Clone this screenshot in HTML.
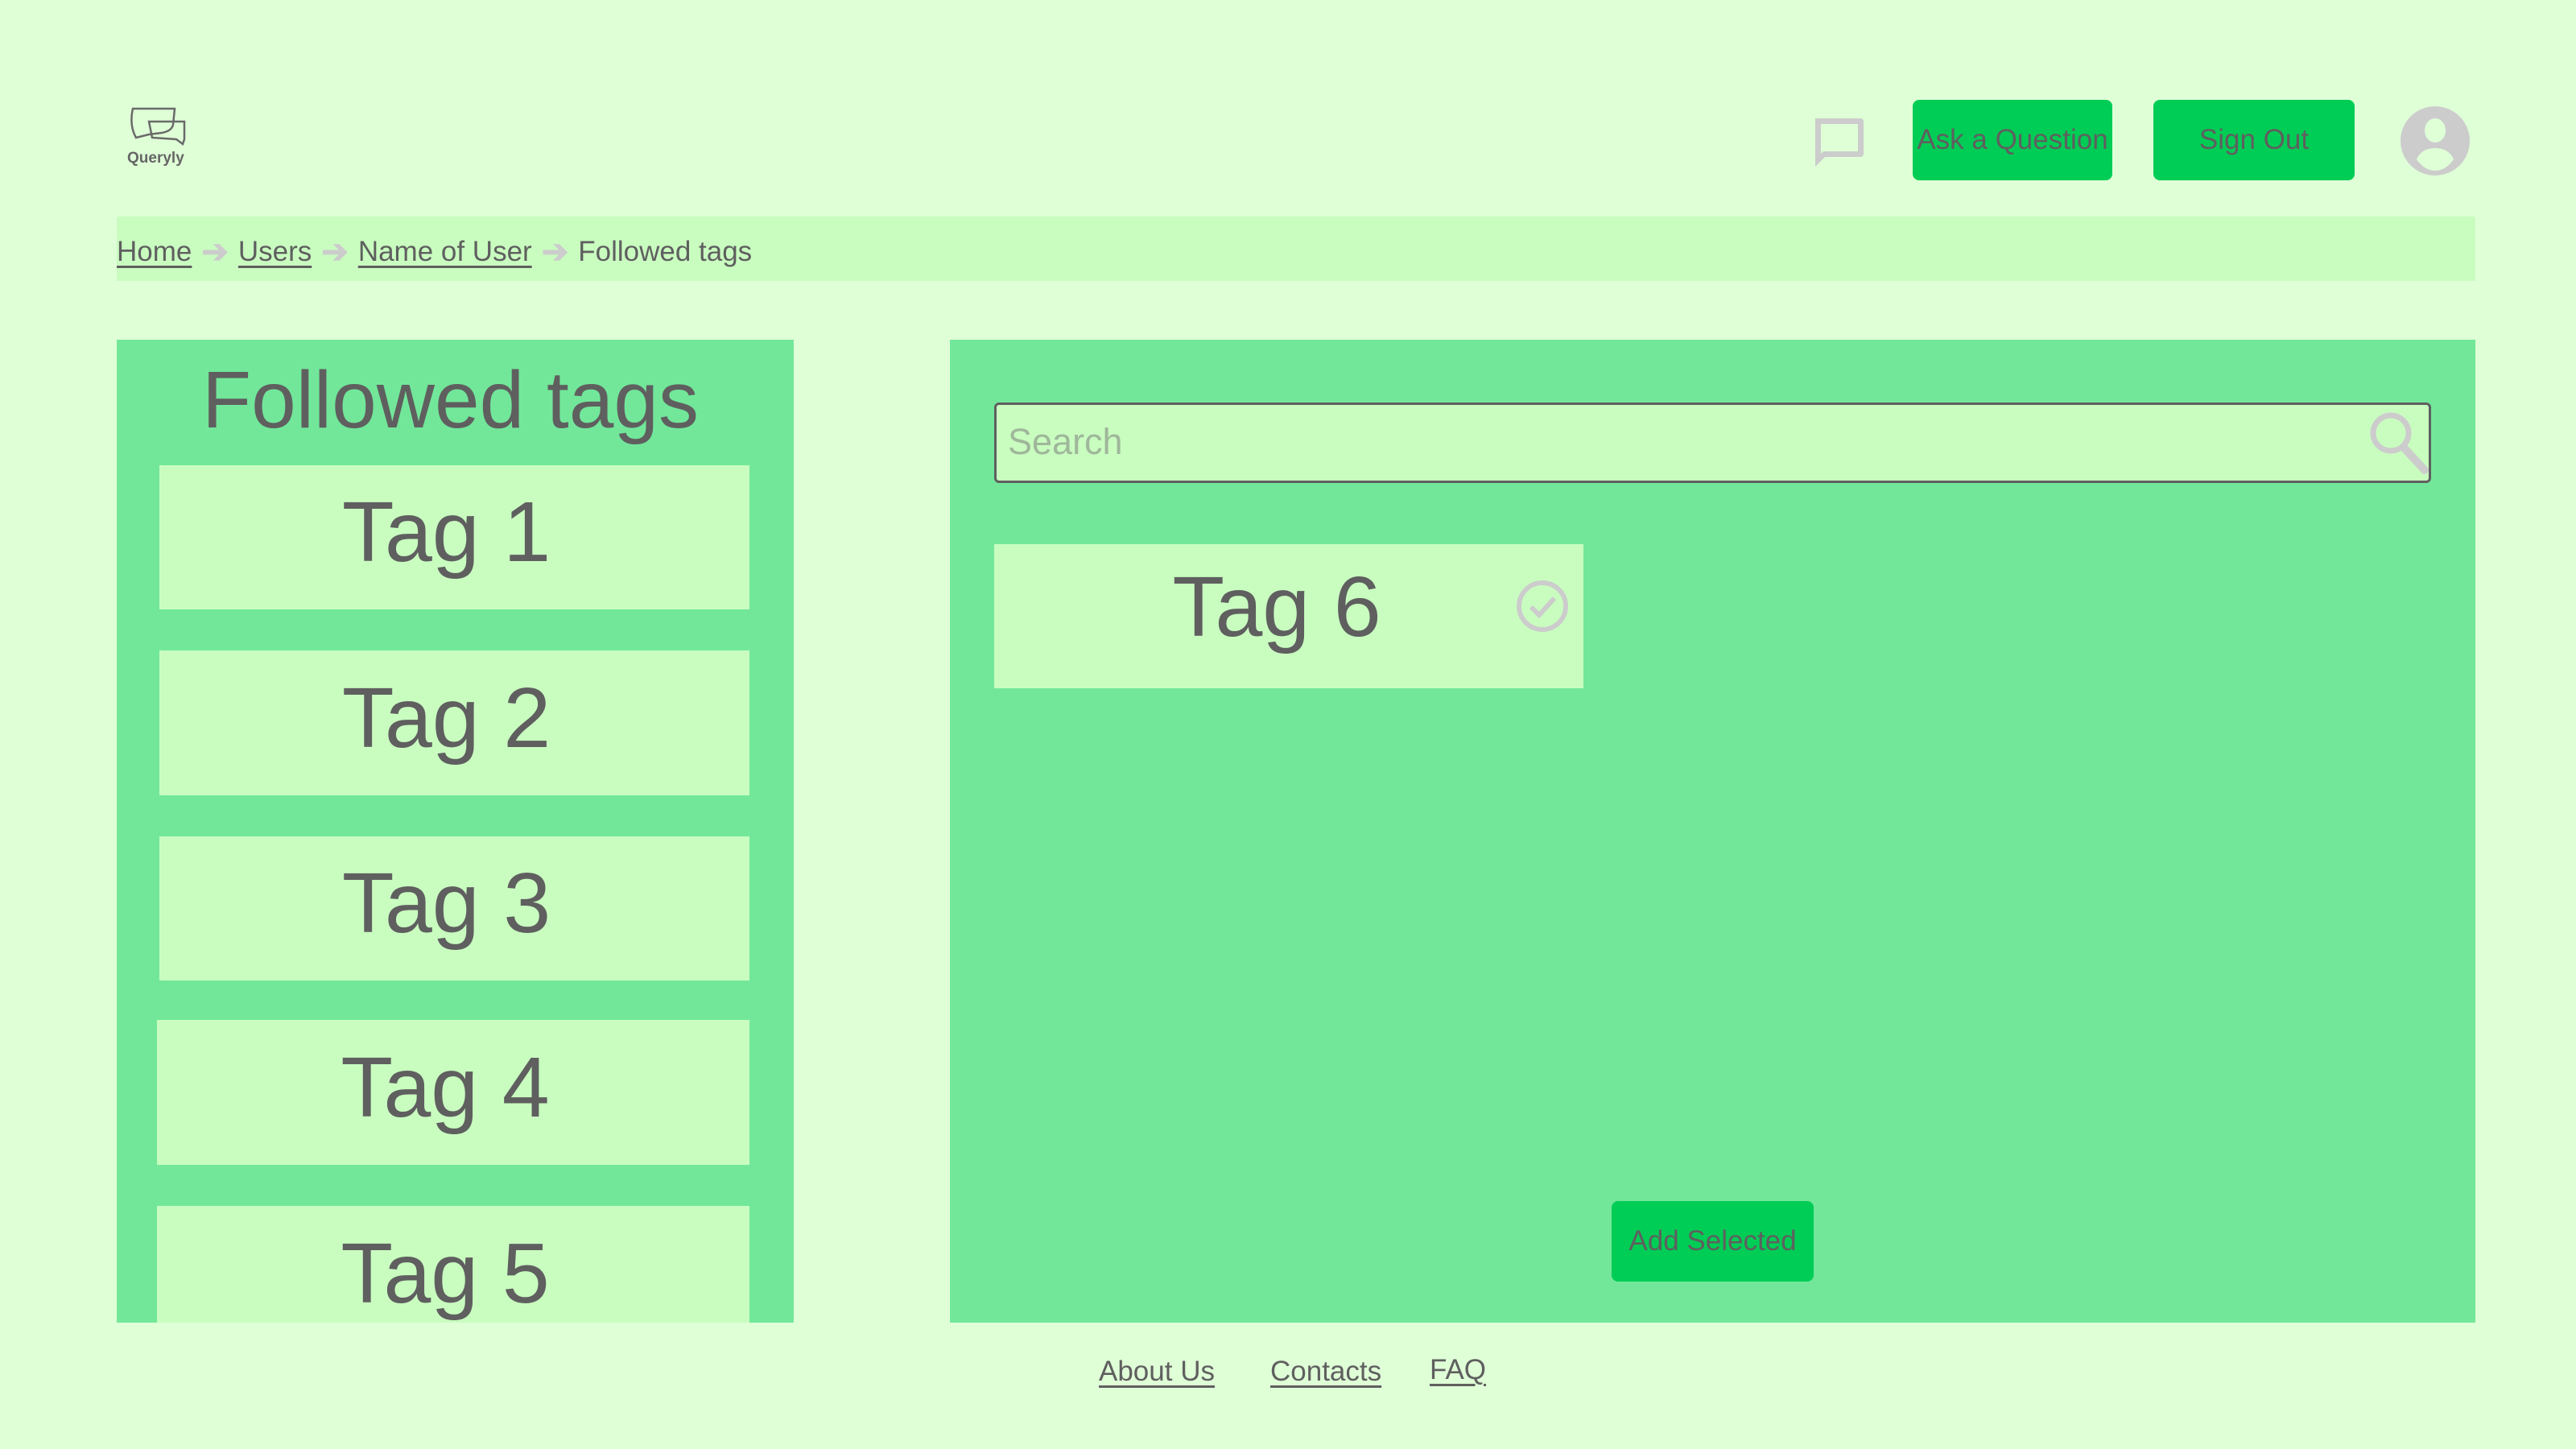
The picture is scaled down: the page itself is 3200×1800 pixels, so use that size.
<!DOCTYPE html>
<html><head><style>
*{margin:0;padding:0;box-sizing:border-box}
body{width:3200px;height:1800px;background:#dfffd7;font-family:"Liberation Sans",sans-serif;color:#5f5f5f;position:relative;overflow:hidden}
.a{position:absolute}
.btn{background:#00cd55;border-radius:8px;display:flex;align-items:center;justify-content:center;font-size:35px;color:#5f5f5f}
.tag{background:#c9fdc0;display:flex;align-items:center;justify-content:center;font-size:106px;padding-right:20px;padding-bottom:12px}
u{text-decoration:underline;text-decoration-thickness:3px;text-underline-offset:6px}
.arr{color:#ccc;font-size:40px;font-weight:bold;margin:0 12px 0 12px}
</style></head><body>
<svg class="a" style="left:159px;top:133px" width="72" height="50" viewBox="0 0 72 50" fill="none" stroke="#6a6a6a" stroke-width="2.5">
<path d="M6 2 L58 2 L56 22 Q54 30 42 32 L26 34 L10 38 L8 34 Q2 20 6 2 Z"/>
<path d="M26 18 L70 18 L70 40 L68 46 L60 40 L30 38 L26 18 Z"/>
</svg>
<div class="a" style="left:158px;top:186px;font-size:19px;font-weight:bold;color:#666">Queryly</div>
<svg class="a" style="left:2253px;top:143px" width="66" height="66" viewBox="0 0 66 66"><path d="M6 4 H58 A4 4 0 0 1 62 8 V48 A4 4 0 0 1 58 52 H14 L2 64 V4 Z M9 11 V48 L12 45 H55 V11 Z" fill="#ccc"/></svg>
<div class="a btn" style="left:2376px;top:124px;width:248px;height:100px">Ask a Question</div>
<div class="a btn" style="left:2675px;top:124px;width:250px;height:100px">Sign Out</div>
<svg class="a" style="left:2982px;top:132px" width="86" height="86" viewBox="0 0 86 86"><circle cx="43" cy="43" r="43" fill="#ccc"/><ellipse cx="43" cy="30" rx="13" ry="15" fill="#dfffd7"/><path d="M20 66 Q26 52 43 52 Q60 52 66 66 Q56 80 43 80 Q30 80 20 66Z" fill="#dfffd7"/></svg>
<div class="a" style="left:145px;top:269px;width:2930px;height:80px;background:#c9fdc0"></div>
<div class="a" style="left:145px;top:290px;font-size:35px;display:flex;align-items:center">
<u>Home</u><span class="arr">➔</span><u>Users</u><span class="arr">➔</span><u>Name of User</u><span class="arr">➔</span><span>Followed tags</span></div>
<div class="a" style="left:145px;top:422px;width:841px;height:1221px;background:#72e79a;overflow:hidden">
<div class="a" style="left:-6px;width:841px;top:18px;text-align:center;font-size:100px">Followed tags</div>
<div class="a tag" style="left:53px;top:156px;width:733px;height:179px">Tag 1</div>
<div class="a tag" style="left:53px;top:386px;width:733px;height:180px">Tag 2</div>
<div class="a tag" style="left:53px;top:617px;width:733px;height:179px">Tag 3</div>
<div class="a tag" style="left:50px;top:845px;width:736px;height:180px">Tag 4</div>
<div class="a tag" style="left:50px;top:1076px;width:736px;height:180px">Tag 5</div>
</div>
<div class="a" style="left:1180px;top:422px;width:1895px;height:1221px;background:#72e79a"></div>
<div class="a" style="left:1235px;top:500px;width:1785px;height:100px;background:#c9fdc0;border:3px solid #5f5f5f;border-radius:6px;font-size:45px;color:#9fb79a;padding:20px 0 0 14px">Search</div>
<svg class="a" style="left:2940px;top:508px" width="78" height="84" viewBox="0 0 78 84"><circle cx="30" cy="30" r="22" fill="none" stroke="#ccc" stroke-width="7"/><path d="M46 48 L72 76" stroke="#ccc" stroke-width="10" stroke-linecap="round"/></svg>
<div class="a tag" style="left:1235px;top:676px;width:732px;height:179px;font-size:106px;padding-right:30px;padding-bottom:22px">Tag 6</div>
<svg class="a" style="left:1882px;top:719px" width="68" height="68" viewBox="0 0 68 68"><circle cx="34" cy="34" r="29" fill="none" stroke="#ccc" stroke-width="6"/><path d="M20 35 L30 45 L49 24" fill="none" stroke="#ccc" stroke-width="6"/></svg>
<div class="a btn" style="left:2002px;top:1492px;width:251px;height:100px">Add Selected</div>
<div class="a" style="left:1365px;top:1684px;font-size:35px"><u>About Us</u></div>
<div class="a" style="left:1578px;top:1684px;font-size:35px"><u>Contacts</u></div>
<div class="a" style="left:1776px;top:1682px;font-size:35px"><u>FAQ</u></div>
</body></html>
